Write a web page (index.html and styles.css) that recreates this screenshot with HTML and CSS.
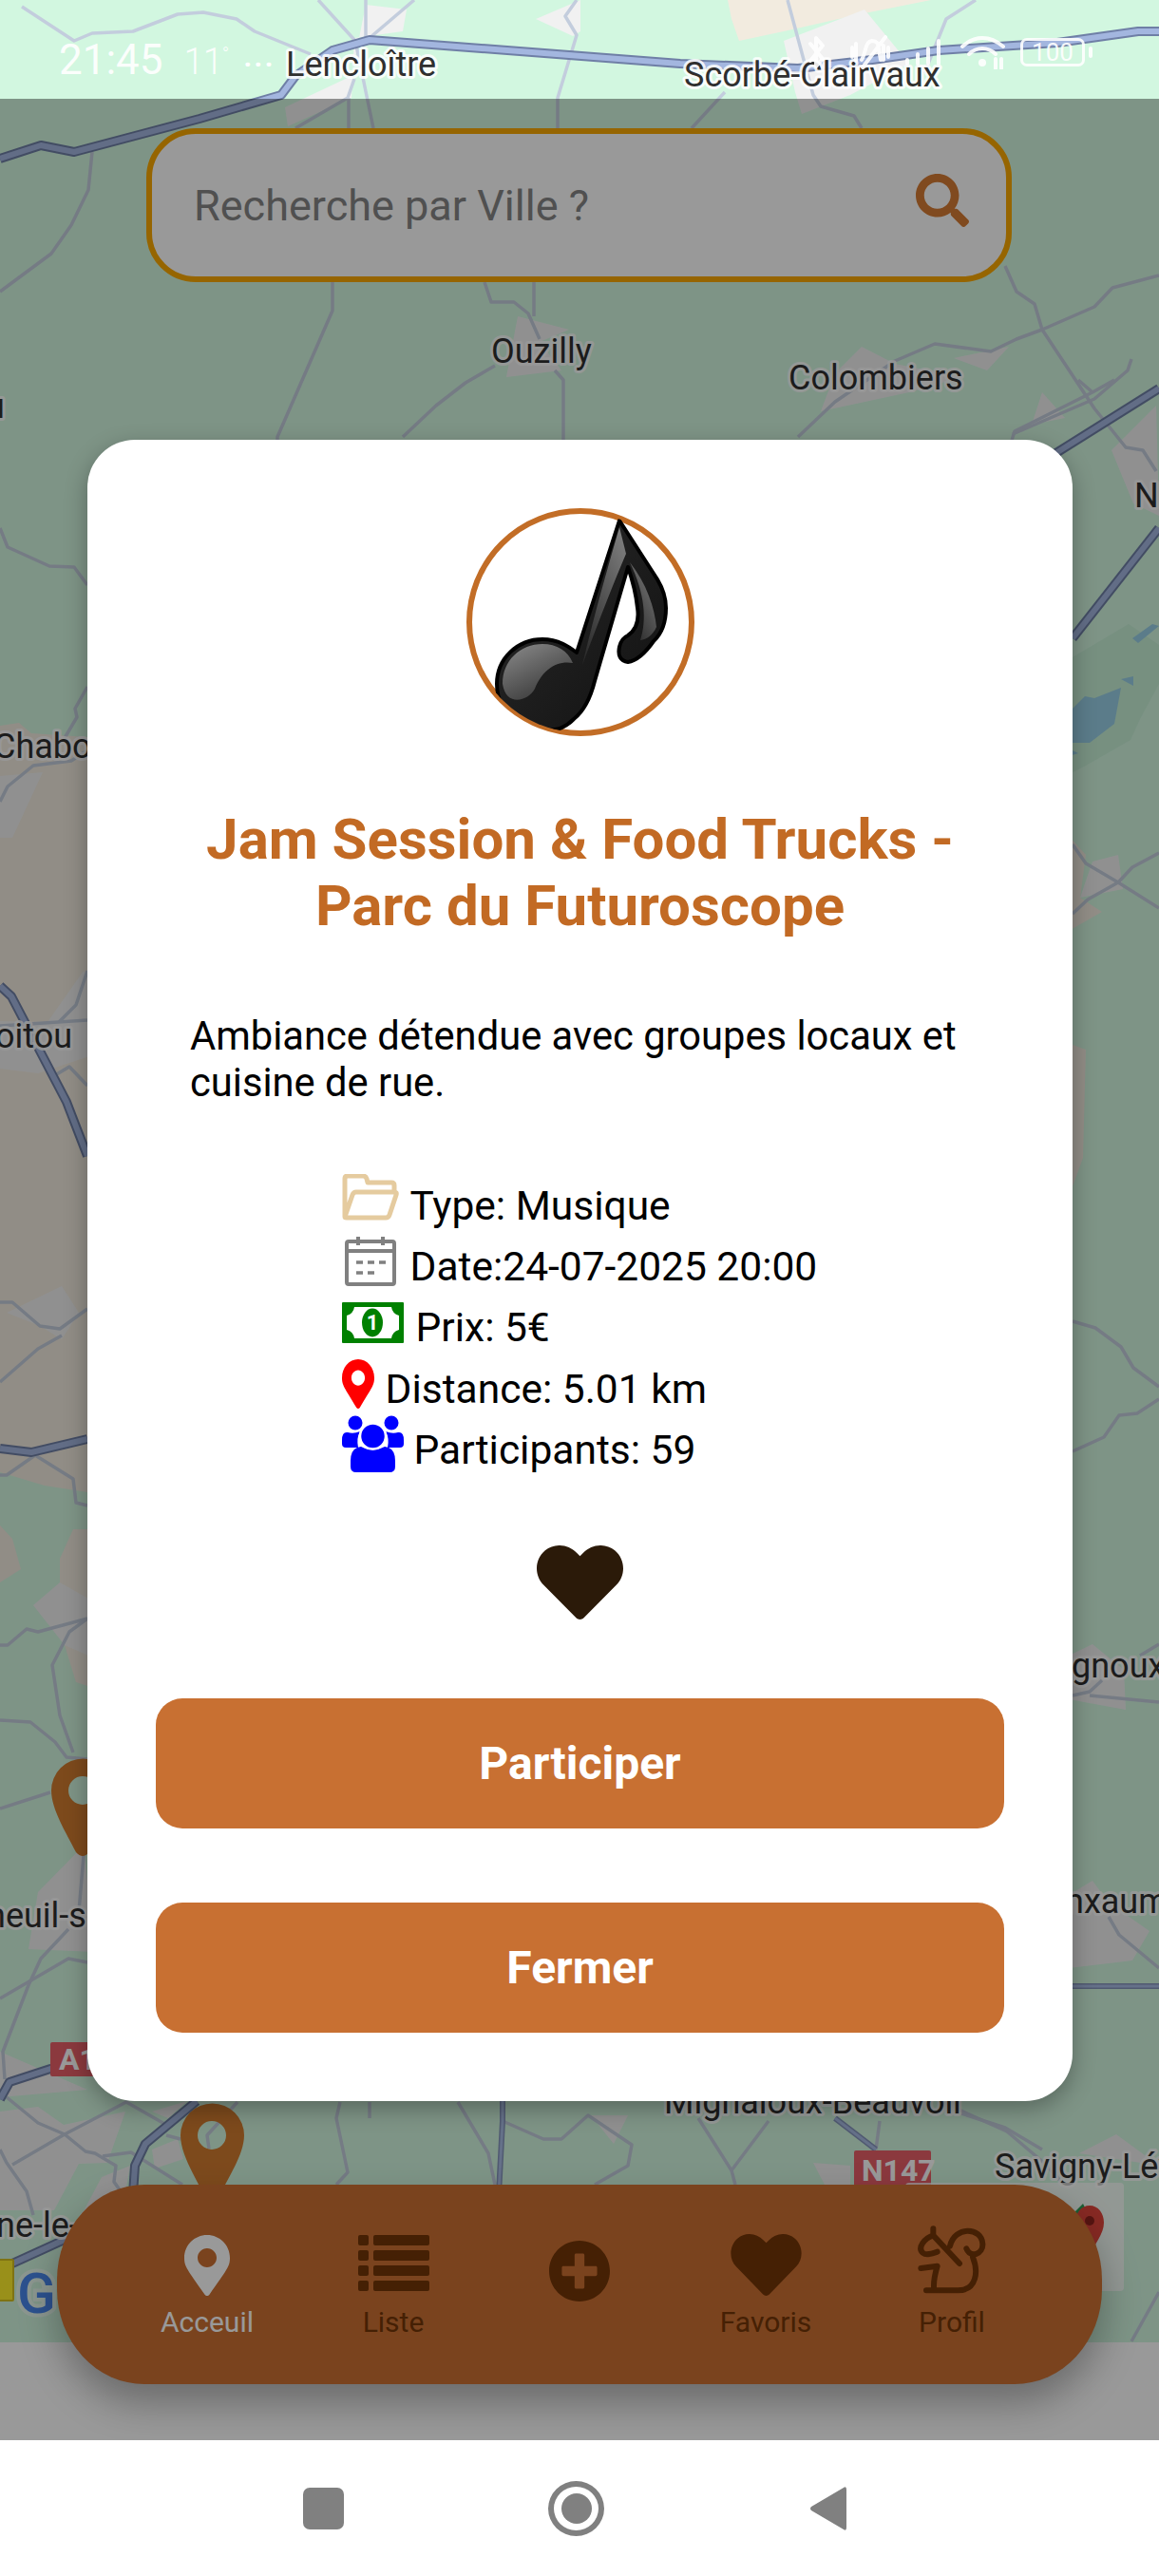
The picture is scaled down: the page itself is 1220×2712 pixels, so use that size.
FILE: index.html
```html
<!DOCTYPE html>
<html lang="fr">
<head>
<meta charset="utf-8">
<title>Événement</title>
<link rel="stylesheet" href="styles.css">
</head>
<body>
<div class="screen">
  <svg class="map" viewBox="0 0 1220 2466" width="1220" height="2466" aria-hidden="false">
    <defs>
      <path id="r1" d="M1220 33 H1198 L1113 45 L988 53 L918 63 L840 72 L716 67 L599 58 L389 42 L350 53 L311 80 L296 100 L210 125 L78 160 L43 153 L0 167"/>
      <path id="r2" d="M1220 409 L1110 478"/>
      <path id="r3" d="M1220 556 L1129 672"/>
      <path id="r4" d="M0 1038 L12 1049 L70 1160 L92 1217"/>
      <path id="r5" d="M0 1525 L33 1529 L92 1515"/>
      <path id="r6" d="M0 2210 L10 2192 L53 2178 L70 2174"/>
      <path id="r7" d="M207 2212 L153 2257 L142 2280 L140 2310"/>
      <path id="r8" d="M70 2357 L13 2383"/>
      <path id="r9" d="M529 2210 V2233 L525 2310"/>
      <path id="r10" d="M879 2230 L922 2263"/>
      <path id="r11" d="M1129 2091 H1220"/>
    </defs>

    <rect class="m-base" width="1220" height="2466"/>

    <path class="m-tan" d="M0 764 L20 761 L33 772 L92 776 H140 V1571 H92 L47 1564 L0 1550Z"/>
    <path class="m-tan" d="M0 1606 L13 1620 L22 1652 L0 1666Z"/>
    <path class="m-tan" d="M63 1641 L77 1610 H140 V1775 H92 L80 1771 L68 1732 L63 1683Z"/>
    <path class="m-tan" d="M1129 1100 L1143 1105 L1140 1219 L1129 1249Z"/>
    <path class="m-tan" d="M1125 880 L1143 900 L1137 945 L1160 960 L1125 980Z"/>
    <path class="m-tan" d="M766 0 L770 20 L778 43 L825 33 L905 15 L980 0Z"/>

    <path class="m-wood" d="M1129 692 L1188 657 L1220 679 V720 L1200 757 L1190 779 L1143 806 L1129 813Z"/>
    <path class="m-water" d="M1125 750 L1142 733 L1152 735 L1180 724 L1173 762 L1147 782 H1125Z"/>
    <path class="m-water" d="M1192 672 L1213 657 L1220 659 L1198 677Z"/>
    <path class="m-water" d="M1180 715 L1193 712 L1193 722Z"/>
    <path class="m-water" d="M1125 788 L1135 793 L1125 796Z"/>

    <g class="m-city">
      <path d="M385 5 L428 10 L424 33 L373 40 L370 103 L303 133 L300 113 L370 80Z"/>
      <path d="M564 20 L611 0 V33 L603 38Z"/>
      <path d="M825 43 L910 10 L957 67 L895 100 L844 120 L837 97Z"/>
      <path d="M545 333 L599 347 L568 360 L591 390 L533 397Z"/>
      <path d="M907 365 L942 383 L1012 397 L957 413 L864 433 L879 393Z"/>
      <path d="M1004 377 L1062 365 L1039 390Z"/>
      <path d="M1097 413 L1121 440 L1086 447Z"/>
      <path d="M1217 427 L1170 474 L1193 530 L1220 543Z"/>
      <path d="M0 817 L45 813 L13 882 H0Z"/>
      <path d="M88 1022 L100 1040 V1110 L40 1130 L0 1125 V1075 L50 1076Z"/>
      <path d="M7 1382 L65 1354 L83 1382 L65 1410 L42 1396Z"/>
      <path d="M35 1690 L63 1666 L100 1687 V1746 L68 1732Z"/>
      <path d="M40 1992 L88 1943 L100 2055 L30 2052Z"/>
      <path d="M0 2160 L92 2200 L0 2208Z"/>
      <path d="M1137 945 L1150 907 L1177 900 L1182 936Z"/>
      <path d="M1125 1743 L1150 1731 L1183 1758 L1185 1800 L1125 1789Z"/>
      <path d="M1125 1995 L1150 1980 L1167 2003 L1210 2033 L1192 2064 L1125 2072Z"/>
      <path d="M0 2223 L40 2218 L67 2237 L132 2223 L113 2277 L83 2278 L57 2327 H0Z"/>
      <path d="M107 2292 L137 2280 L133 2303 L80 2343Z"/>
      <path d="M160 2263 L187 2252 L193 2273 L163 2283Z"/>
      <path d="M160 2223 L197 2212 L177 2230Z"/>
      <path d="M622 2227 L661 2227 L646 2257Z"/>
      <path d="M1175 2247 L1220 2280 L1136 2267Z"/>
      <path d="M856 2277 L895 2280 V2300 H868Z"/>
    </g>

    <g class="m-minor">
      <path d="M23 7 L78 43 L97 35 L140 33 L187 15 L214 13 L249 20 L268 33 L327 57"/>
      <path d="M335 0 L374 43 L393 135"/>
      <path d="M385 0 V43"/>
      <path d="M436 0 L389 40"/>
      <path d="M373 83 L366 103 L311 135"/>
      <path d="M367 103 V135"/>
      <path d="M607 0 L595 17 L607 37 L587 103 V135"/>
      <path d="M829 0 L856 100 L864 112 L899 122 L907 135"/>
      <path d="M1027 0 L996 20 L973 77"/>
      <path d="M763 97 L728 135"/>
      <path d="M97 160 L93 200 L75 237 L54 267 L0 307"/>
      <path d="M350 297 V327 L292 460 V600"/>
      <path d="M510 297 L517 318 H541 L556 330 L568 357"/>
      <path d="M562 297 V333"/>
      <path d="M521 385 L490 403 L459 427 L424 460"/>
      <path d="M584 390 L593 400 V470"/>
      <path d="M1058 280 L1070 307 L1089 320 L1097 347 L1152 430 L1185 471 L1203 474 L1217 496"/>
      <path d="M1220 290 L1171 303 L1152 323 L1097 347 L1070 357 L1043 370 L984 362 L942 380 L879 423 L840 460"/>
      <path d="M1191 378 L1187 390 L1152 420 L1066 457"/>
      <path d="M1173 400 L1150 413 L1068 454 L1063 470"/>
      <path d="M1135 400 L1150 413"/>
      <path d="M0 556 L8 576 L52 596 L78 597 L92 616"/>
      <path d="M92 723 L79 746 L81 755 L68 777"/>
      <path d="M0 844 L8 828 L35 806 L75 801 L92 790"/>
      <path d="M92 1022 L80 1058 L62 1076"/>
      <path d="M0 1080 L92 1074"/>
      <path d="M58 1132 L73 1123 L92 1143"/>
      <path d="M0 1371 H13 L42 1396 L63 1399 L92 1378"/>
      <path d="M0 1455 L40 1420 L65 1406"/>
      <path d="M0 1553 H7 L37 1532 L77 1557 L80 1582 L92 1585"/>
      <path d="M0 1732 H8 L28 1715 L40 1718 L92 1704"/>
      <path d="M92 1704 L73 1718 L55 1753 L63 1806 L77 1845"/>
      <path d="M0 1811 L32 1813 L58 1834 L70 1850 L92 1852"/>
      <path d="M0 1904 L53 1887"/>
      <path d="M88 1953 L83 2013"/>
      <path d="M72 2031 L43 2062 L30 2090 L3 2160 L5 2189"/>
      <path d="M0 2104 L72 2062 L92 2066"/>
      <path d="M1129 889 L1143 909 L1177 929 L1220 956"/>
      <path d="M1129 962 L1145 947 L1177 929 L1192 913 L1220 898"/>
      <path d="M1129 1391 L1153 1398 L1180 1418 L1193 1440 L1220 1460"/>
      <path d="M1129 1528 L1162 1513 L1178 1490 L1197 1488 L1220 1473"/>
      <path d="M1129 1785 L1147 1781 L1160 1769"/>
      <path d="M1147 1785 L1220 1792"/>
      <path d="M1200 1743 L1220 1731"/>
      <path d="M1167 2018 L1178 2037 L1220 2072"/>
      <path d="M1007 2220 L1060 2244 L1100 2278 L1120 2300"/>
      <path d="M7 2208 L40 2235 L68 2247 L90 2265 L100 2267 L122 2280 L120 2297 L127 2307"/>
      <path d="M13 2279 L68 2247 L133 2213 L175 2237"/>
      <path d="M0 2263 L7 2277 L28 2307 L35 2332"/>
      <path d="M108 2270 L138 2266 L192 2300"/>
      <path d="M175 2248 L190 2252"/>
      <path d="M220 2262 L218 2248 L250 2213"/>
      <path d="M358 2213 L354 2230 L366 2287 L354 2300"/>
      <path d="M482 2213 L514 2267 L521 2300"/>
      <path d="M529 2233 L572 2252 H591 L619 2227 L665 2258 L661 2280 L626 2300"/>
      <path d="M389 2213 V2230"/>
      <path d="M735 2230 L770 2285 L774 2300"/>
      <path d="M809 2233 L770 2285"/>
      <path d="M1012 2225 L1058 2240 L1097 2263"/>
      <path d="M926 2233 L922 2263"/>
      <path d="M1220 2413 L1191 2465"/>
    </g>

    <g class="m-major-o">
      <use href="#r1"/><use href="#r2"/><use href="#r3"/><use href="#r4"/><use href="#r5"/><use href="#r6"/><use href="#r7"/><use href="#r8"/>
    </g>
    <g class="m-major">
      <use href="#r1"/><use href="#r2"/><use href="#r3"/><use href="#r4"/><use href="#r5"/><use href="#r6"/><use href="#r7"/><use href="#r8"/>
    </g>
    <g class="m-med-o"><use href="#r9"/><use href="#r10"/><use href="#r11"/></g>
    <g class="m-med"><use href="#r9"/><use href="#r10"/><use href="#r11"/></g>

    <g class="m-label">
      <text x="301" y="80">Lencloître</text>
      <text x="720" y="91">Scorbé-Clairvaux</text>
      <text x="517" y="382">Ouzilly</text>
      <text x="830" y="410">Colombiers</text>
      <text x="-15" y="440">u</text>
      <text x="1194" y="534">N</text>
      <text x="-7" y="798">Chabo</text>
      <text x="-5" y="1103">oitou</text>
      <text x="-14" y="2029">neuil-s</text>
      <text x="1128" y="1766">gnoux</text>
      <text x="1121" y="2014">nxaum</text>
      <text x="699" y="2225">Mignaloux-Beauvoir</text>
      <text x="1047" y="2293">Savigny-Lév</text>
      <text x="-4" y="2355">ne-le-C</text>
    </g>

    <rect class="m-shield" x="53" y="2150" width="60" height="36" rx="2"/>
    <text class="m-shield-t" x="62" y="2179">A10</text>
    <rect class="m-shield" x="899" y="2264" width="81" height="40" rx="2"/>
    <text class="m-shield-t" x="907" y="2296">N147</text>

    <path class="m-pin" d="M80 1950 C70 1930 54 1905 54 1885 A33.500 33.500 0 0 1 121 1885 C121 1905 104 1930 94 1950 Q87 1958 80 1950Z M87 1870 A15 15 0 1 0 87 1900 A15 15 0 1 0 87 1870Z" fill-rule="evenodd"/>
    <path class="m-pin" d="M216 2313 C206 2293 190 2268 190 2248 A33.500 33.500 0 0 1 257 2248 C257 2268 240 2293 230 2313 Q223 2321 216 2313Z M223 2233 A15 15 0 1 0 223 2263 A15 15 0 1 0 223 2233Z" fill-rule="evenodd"/>

    <rect class="m-card" x="953" y="2298" width="230" height="114" rx="4"/>
    <path class="m-gmap-g" d="M1120 2340 L1140 2320 L1150 2340 L1140 2400 H1120Z"/>
    <path class="m-gmap-r" d="M1147 2322 C1156 2322 1162 2330 1162 2340 C1162 2352 1152 2362 1147 2376 C1142 2362 1132 2352 1132 2340 C1132 2330 1138 2322 1147 2322Z"/>
    <circle class="m-gmap-d" cx="1147" cy="2338" r="5"/>
    <rect class="m-glogo-y" x="-4" y="2379" width="18" height="43" rx="1"/>
    <text class="m-glogo" x="18" y="2435">G</text>
  </svg>

  <div class="status">
    <div class="status-left">
      <span class="clock">21:45</span>
      <span class="temp">11<span class="deg">°</span></span>
      <span class="dots">···</span>
    </div>
    <div class="status-right">
      <svg class="st-bt" viewBox="0 0 20 36" width="20" height="36"><path d="M3 9 L16 25 L9 33 V3 L16 11 L3 27"/></svg>
      <svg class="st-mute" viewBox="0 0 44 36" width="44" height="36"><path d="M13 26 C18 18 16 7 24 6 C30 6 31 10 31 15 L33 26 M38 2 L14 34 M3 13 V23 M7 9 V27 M36 11 V26 M41 13 V23"/></svg>
      <svg class="st-sig" viewBox="0 0 44 36" width="44" height="36"><path d="M3 30 V26 M14 30 V20 M25 30 V14 M36 30 V6"/></svg>
      <svg class="st-wifi" viewBox="0 0 50 36" width="50" height="36"><path d="M3 12 C16 0 32 0 46 12 M10 20 C18 12 30 12 38 20"/><circle cx="24" cy="29" r="4"/><path d="M38 25 V35 M44 25 V35"/></svg>
      <div class="battery"><span>100</span></div>
      <span class="battery-nub"></span>
    </div>
  </div>

  <div class="scrim-host">
    <div class="search">
      <span class="search-ph">Recherche par Ville ?</span>
      <svg class="search-ic" viewBox="0 0 512 512" width="56" height="56"><path d="M505 442.700L405.300 343c-4.500-4.500-10.600-7-17-7H372c27.600-35.300 44-79.700 44-128C416 93.100 322.900 0 208 0S0 93.100 0 208s93.100 208 208 208c48.300 0 92.700-16.400 128-44v16.300c0 6.400 2.500 12.500 7 17l99.700 99.700c9.400 9.400 24.600 9.400 33.900 0l28.300-28.300c9.400-9.400 9.400-24.600.1-34zM208 336c-70.700 0-128-57.200-128-128 0-70.700 57.200-128 128-128 70.700 0 128 57.200 128 128 0 70.700-57.200 128-128 128z"/></svg>
    </div>
    <nav class="tabs">
      <a class="tab tab-on">
        <span class="tab-ic"><svg class="ic-pin" viewBox="0 0 384 512" width="48" height="64"><path d="M172.268 501.670C26.970 291.031 0 269.413 0 192 0 85.961 85.961 0 192 0s192 85.961 192 192c0 77.413-26.970 99.031-172.268 309.670-9.535 13.774-29.930 13.773-39.464 0zM192 272c44.183 0 80-35.817 80-80s-35.817-80-80-80-80 35.817-80 80 35.817 80 80 80z"/></svg></span>
        <span class="tab-t">Acceuil</span>
      </a>
      <a class="tab">
        <span class="tab-ic"><svg class="ic-list" viewBox="0 0 75 59" width="75" height="59"><rect width="11" height="11" rx="2"/><rect x="16" width="59" height="11" rx="2"/><rect y="16" width="11" height="11" rx="2"/><rect x="16" y="16" width="59" height="11" rx="2"/><rect y="32" width="11" height="11" rx="2"/><rect x="16" y="32" width="59" height="11" rx="2"/><rect y="48" width="11" height="11" rx="2"/><rect x="16" y="48" width="59" height="11" rx="2"/></svg></span>
        <span class="tab-t">Liste</span>
      </a>
      <a class="tab">
        <span class="tab-ic"><svg class="ic-plus" viewBox="8 8 496 496" width="64" height="64"><path d="M256 8C119 8 8 119 8 256s111 248 248 248 248-111 248-248S393 8 256 8zm144 276c0 6.600-5.400 12-12 12h-92v92c0 6.600-5.400 12-12 12h-56c-6.600 0-12-5.400-12-12v-92h-92c-6.600 0-12-5.400-12-12v-56c0-6.600 5.400-12 12-12h92v-92c0-6.600 5.400-12 12-12h56c6.600 0 12 5.400 12 12v92h92c6.600 0 12 5.400 12 12v56z"/></svg></span>
        <span class="tab-t">&nbsp;</span>
      </a>
      <a class="tab">
        <span class="tab-ic"><svg class="ic-heart" viewBox="0 32 512 448" width="75" height="65"><path d="M462.300 62.600C407.500 15.900 326 24.300 275.700 76.200L256 96.500l-19.700-20.300C186.100 24.300 104.500 15.900 49.700 62.600c-62.800 53.600-66.100 149.800-9.900 207.900l193.500 199.800c12.500 12.900 32.800 12.900 45.300 0l193.500-199.800c56.300-58.100 53-154.300-9.800-207.900z"/></svg></span>
        <span class="tab-t">Favoris</span>
      </a>
      <a class="tab">
        <span class="tab-ic"><svg class="ic-squirrel" viewBox="795 45 225 222" width="75" height="74"><path d="M847 55 V76 L930 165 M847 76 C820 85 795 115 815 132 C825 140 845 133 860 128 M808 180 L860 173 C852 200 846 225 850 250 M825 250 H925 C985 250 990 190 972 145 M952 118 C965 150 1005 135 1003 103 C1000 50 915 45 900 110"/></svg></span>
        <span class="tab-t">Profil</span>
      </a>
    </nav>
    <div class="scrim"></div>
  </div>

  <section class="modal">
    <div class="avatar">
      <svg class="note" viewBox="0 0 240 240" width="240" height="240">
        <defs>
          <clipPath id="cc"><circle cx="120" cy="120" r="116"/></clipPath>
          <linearGradient id="nb" x1="0" y1="0" x2="1" y2="1"><stop offset="0" stop-color="#2a2a2a"/><stop offset="1" stop-color="#111"/></linearGradient>
          <linearGradient id="nh" x1="0" y1="0" x2="0.6" y2="1"><stop offset="0" stop-color="#8c8c8c"/><stop offset="1" stop-color="#3a3a3a"/></linearGradient>
          <linearGradient id="ns" x1="0.8" y1="0" x2="0.2" y2="1"><stop offset="0" stop-color="#7c7c7c"/><stop offset="1" stop-color="#2c2c2c"/></linearGradient>
        </defs>
        <g clip-path="url(#cc)">
          <path class="note-body" d="M161 13 L201 75 Q210 90 210 105 Q210 128 197 140 Q183 160 170 162 Q158 160 161 146 Q163 137 170 134 Q183 125 180 105 Q178 85 170 62 L135 182 Q128 210 113 222 Q103 232 93 233 C60 240 32 215 32 185 C32 158 54 138 80 138 C97 138 108 146 116 152Z"/>
          <path class="note-hi" d="M38 185 C38 160 57 143 80 143 C95 143 107 150 112 163 C95 160 80 170 72 190 C65 203 42 210 38 185Z" fill="url(#nh)"/>
          <path class="note-hi" d="M161 20 L168 48 Q150 90 122 165 C135 110 148 65 161 20Z" fill="url(#ns)"/>
          <path class="note-hi" d="M172 57 C190 80 198 105 200 125 C196 134 190 138 183 139 C190 118 188 90 172 57Z" fill="url(#ns)"/>
        </g>
      </svg>
    </div>
    <h1 class="title">Jam Session &amp; Food Trucks - Parc du Futuroscope</h1>
    <p class="desc">Ambiance détendue avec groupes locaux et cuisine de rue.</p>
    <ul class="facts">
      <li class="fact fact-type">
        <svg class="f-folder" viewBox="0 0 60 49" width="60" height="49"><path d="M3 45 V5 Q3 2 6 2 H22 Q25 2 26 5 L27 9 H52 Q55 9 55 12 V19 M3 45 L11 22 Q12 19 15 19 H55 Q58 19 57 22 L50 43 Q49 46 46 46 H5 Q3 46 3 45Z"/></svg>
        <span>Type: Musique</span>
      </li>
      <li class="fact fact-date">
        <svg class="f-cal" viewBox="0 0 54 53" width="54" height="53"><rect x="2" y="6" width="50" height="45" rx="2"/><path d="M2 16 H52 M14 1 V10 M40 1 V10"/><path class="f-cal-d" d="M12 28 H19 M24 28 H31 M36 28 H43 M12 39 H19 M24 39 H31"/></svg>
        <span>Date:24-07-2025 20:00</span>
      </li>
      <li class="fact fact-price">
        <svg class="f-money" viewBox="0 0 65 43" width="65" height="43"><rect width="65" height="43" rx="1" class="m-b"/><path class="m-w" d="M5 14 Q12 12 13 5 H52 Q53 12 60 14 V29 Q53 31 52 38 H13 Q12 31 5 29Z"/><ellipse class="m-b" cx="32" cy="21.500" rx="11" ry="15"/><text class="m-one" x="32" y="29">1</text></svg>
        <span>Prix: 5€</span>
      </li>
      <li class="fact fact-dist">
        <svg class="f-pin" viewBox="0 0 384 512" width="34" height="52" preserveAspectRatio="none"><path d="M172.268 501.670C26.970 291.031 0 269.413 0 192 0 85.961 85.961 0 192 0s192 85.961 192 192c0 77.413-26.970 99.031-172.268 309.670-9.535 13.774-29.930 13.773-39.464 0zM192 272c44.183 0 80-35.817 80-80s-35.817-80-80-80-80 35.817-80 80 35.817 80 80 80z"/></svg>
        <span>Distance: 5.01 km</span>
      </li>
      <li class="fact fact-part">
        <svg class="f-users" viewBox="0 0 65 60" width="65" height="60"><circle cx="14" cy="8" r="7.500"/><circle cx="52" cy="8" r="7.500"/><path d="M0 26 Q0 17 6 18 Q12 20 19 17 Q15 24 17 34 H4 Q0 34 0 30Z"/><path d="M65 26 Q65 17 59 18 Q53 20 46 17 Q50 24 48 34 H61 Q65 34 65 30Z"/><path class="u-body" d="M9 48 Q9 34 20 33 Q32 40 45 33 Q56 34 56 48 V54 Q56 60 50 60 H15 Q9 60 9 54Z"/><circle class="u-head" cx="32.500" cy="22" r="13.500"/></svg>
        <span>Participants: 59</span>
      </li>
    </ul>
    <svg class="fav" viewBox="0 32 512 448" width="91" height="78" preserveAspectRatio="none"><path d="M462.300 62.600C407.500 15.900 326 24.300 275.700 76.200L256 96.500l-19.700-20.300C186.100 24.300 104.500 15.900 49.700 62.600c-62.800 53.600-66.100 149.800-9.900 207.900l193.500 199.800c12.500 12.900 32.800 12.900 45.300 0l193.500-199.800c56.300-58.100 53-154.300-9.800-207.900z"/></svg>
    <button class="btn btn-join">Participer</button>
    <button class="btn btn-close">Fermer</button>
  </section>

  <footer class="sysnav">
    <span class="sys-square"></span>
    <span class="sys-circle"><span></span></span>
    <svg class="sys-back" viewBox="0 0 39 48" width="39" height="48"><path d="M36 2 Q39 0 39 4 V44 Q39 48 36 46 L2 26 Q0 24 2 22Z"/></svg>
  </footer>
</div>
</body>
</html>
```
FILE: styles.css
```css
* { box-sizing: border-box; }
html, body { margin: 0; padding: 0; }
body { width: 1220px; height: 2712px; overflow: hidden; font-family: Roboto, "Liberation Sans", sans-serif; background: #fff; }
.screen { position: relative; width: 1220px; height: 2712px; overflow: hidden; background: #fff; }

/* map canvas */
.map { position: absolute; left: 0; top: 0; display: block; }
.m-base { fill: #d2f7e0; }
.m-tan { fill: #f2ebdf; }
.m-wood { fill: #c6f0d6; }
.m-water { fill: #98cfe6; }
.m-city { fill: #f1f1f1; }
.m-minor path { fill: none; stroke: #c3cddd; stroke-width: 3.5; stroke-linejoin: round; }
.m-major-o use { fill: none; stroke: #6f7fa6; stroke-width: 10; stroke-linejoin: round; }
.m-major use { fill: none; stroke: #a3b6df; stroke-width: 6; stroke-linejoin: round; }
.m-med-o use { fill: none; stroke: #8696bc; stroke-width: 6; stroke-linejoin: round; }
.m-med use { fill: none; stroke: #a9bce4; stroke-width: 3; stroke-linejoin: round; }
.m-label text { font: 400 36px Roboto, sans-serif; fill: #2f2f2f; stroke: #fff; stroke-width: 6px; stroke-opacity: .85; paint-order: stroke; stroke-linejoin: round; }
.m-shield { fill: #e85f68; }
.m-shield-t { font: 700 32px Roboto, sans-serif; fill: #fff; }
.m-pin { fill: #d17c30; }
.m-card { fill: #fff; fill-opacity: .75; }
.m-gmap-g { fill: #2f9f58; }
.m-gmap-r { fill: #e2463c; }
.m-gmap-d { fill: #90231e; }
.m-glogo-y { fill: #fff02c; stroke: #d4c020; stroke-width: 2; }
.m-glogo { font: 500 60px Roboto, sans-serif; fill: #4a88ee; stroke: #fff; stroke-width: 8px; stroke-opacity: .5; paint-order: stroke; }

/* status bar */
.status { position: absolute; left: 0; top: 0; width: 1220px; height: 104px; display: flex; justify-content: space-between; align-items: flex-start; padding: 32px 70px 0 62px; color: #fff; }
.status-left { display: flex; align-items: baseline; gap: 8px; }
.clock { font-size: 44px; line-height: 50px; font-weight: 400; opacity: .92; margin-right: 14px; }
.temp { font-size: 38px; line-height: 50px; opacity: .9; font-weight: 300; letter-spacing: -1px; }
.deg { font-size: 20px; vertical-align: 14px; }
.dots { font-size: 30px; line-height: 50px; letter-spacing: 2px; font-weight: 700; margin-left: 8px; }
.status-right { display: flex; align-items: center; gap: 14px; height: 40px; margin-top: 3px; }
.status-right svg { display: block; fill: none; stroke: #fff; stroke-width: 4; stroke-linecap: round; stroke-linejoin: round; opacity: .9; }
.st-wifi circle { fill: #fff; stroke: none; }
.st-bt { margin-right: 10px; }
.battery { width: 68px; height: 30px; border: 3px solid #fff; border-radius: 7px; display: flex; align-items: center; justify-content: center; font-size: 26px; line-height: 24px; opacity: .9; }
.battery-nub { width: 4px; height: 12px; background: #fff; border-radius: 2px; margin-left: -10px; opacity: .9; }

/* dimmed layer */
.scrim-host { position: absolute; inset: 0; height: 2569px; }
.scrim { position: absolute; left: 0; right: 0; top: 104px; bottom: 0; background: rgba(0, 0, 0, .4); }
.search { position: absolute; left: 154px; top: 135px; width: 911px; height: 162px; border: 6px solid #fba800; border-radius: 52px; background: #fff; display: flex; align-items: center; justify-content: space-between; padding: 0 39px 0 44px; }
.search-ph { font-size: 45px; line-height: 50px; color: #858585; margin-top: 2px; }
.search-ic { fill: #d67c34; margin-top: -10px; display: block; }
.tabs { position: absolute; left: 60px; top: 2300px; width: 1100px; height: 210px; border-radius: 92px / 100px; background: #cc7032; display: grid; grid-template-columns: repeat(5, 196px); justify-content: center; box-shadow: 0 20px 40px rgba(0, 0, 0, .3); }
.tab { display: flex; flex-direction: column; align-items: center; padding-top: 45px; color: #733608; fill: #733608; }
.tab-on { color: #fff; fill: #fff; }
.tab-ic { height: 72px; display: flex; align-items: flex-end; }
.tab-ic svg { display: block; }
.ic-list { margin-bottom: 5px; }
.ic-plus { margin-bottom: -6px; }
.ic-squirrel { fill: none; stroke: #733608; stroke-width: 18; stroke-linecap: round; stroke-linejoin: round; }
.tab-t { font-size: 30px; line-height: 34px; margin-top: 11px; }

/* modal */
.modal { position: absolute; left: 92px; top: 463px; width: 1037px; height: 1749px; background: #fff; border-radius: 50px; padding: 72px 72px 0; display: flex; flex-direction: column; box-shadow: 0 8px 24px rgba(0, 0, 0, .3); }
.avatar { width: 240px; height: 240px; border: 6px solid #c26d26; border-radius: 50%; align-self: center; position: relative; flex: none; background: #fff; }
.note { position: absolute; left: -6px; top: -6px; display: block; }
.note-body { fill: url(#nb); stroke: #000; stroke-width: 4; stroke-linejoin: round; }
.title { margin: 74px 0 0; text-align: center; font-size: 60px; line-height: 70px; font-weight: 700; color: #c26a24; padding: 0 20px; }
.desc { margin: 77px 0 0; padding: 0 36px; font-size: 41.700px; line-height: 49px; color: #000; }
.facts { list-style: none; margin: 65.500px 0 0; padding: 0 0 0 195.500px; }
.fact { display: flex; align-items: flex-end; height: 64.250px; font-size: 42.500px; line-height: 48px; color: #000; }
.fact svg { display: block; flex: none; }
.fact span { display: block; }
.f-folder { fill: none; stroke: #e5cb9f; stroke-width: 5; stroke-linejoin: round; margin: 0 12px 8.500px 0; }
.f-cal { fill: none; stroke: #808080; stroke-width: 4; margin: 0 15px 4.500px 3px; }
.f-cal-d { stroke-width: 3.500; }
.f-money { margin: 0 13px 8.500px 0; }
.m-b { fill: #008000; }
.m-w { fill: #fff; }
.m-one { font: 700 22px Roboto, sans-serif; fill: #fff; text-anchor: middle; }
.f-pin { fill: #f00; margin: 0 12px 3.500px 0; }
.f-users { fill: #00f; margin: 0 11px .5px 0; }
.u-head { stroke: #fff; stroke-width: 2.500; }
.fav { fill: #2b1a09; align-self: center; display: block; margin-top: 76.500px; flex: none; }
.btn { display: block; width: 893px; height: 137px; flex: none; border: 0; border-radius: 28px; background: #c87032; color: #fff; font: 700 48px Roboto, sans-serif; }
.btn-join { margin-top: 83px; }
.btn-close { margin-top: 78px; }

/* system navigation */
.sysnav { position: absolute; left: 0; top: 2569px; width: 1220px; height: 143px; background: #fff; }
.sys-square { position: absolute; left: 319px; top: 50px; width: 43px; height: 44px; border-radius: 7px; background: #808080; }
.sys-circle { position: absolute; left: 577px; top: 43px; width: 59px; height: 58px; border: 6px solid #808080; border-radius: 50%; display: flex; align-items: center; justify-content: center; }
.sys-circle span { width: 32px; height: 32px; border-radius: 50%; background: #808080; }
.sys-back { position: absolute; left: 852px; top: 48px; fill: #808080; }
```
